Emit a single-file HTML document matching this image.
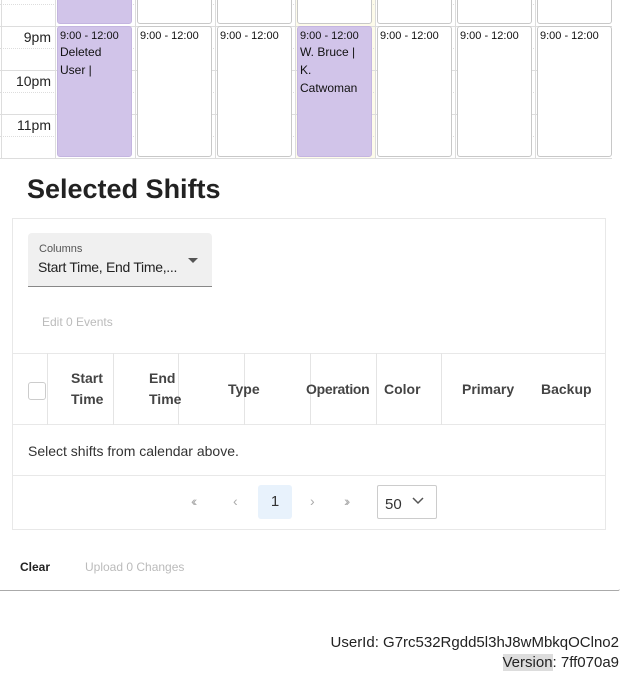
<!DOCTYPE html>
<html><head><meta charset="utf-8"><style>
*{box-sizing:border-box;margin:0;padding:0}
body{width:622px;height:676px;background:#fff;font-family:"Liberation Sans",sans-serif;color:#222;position:relative;overflow:hidden}
.a{position:absolute}
.ev{position:absolute;border:1px solid #c8c8c8;border-radius:3px;background:#fff;font-size:12px;padding:2px 2px;line-height:18px;color:#111}
.ev.p{background:#d1c4e9;border-color:#c4b5e0}
.ev .t{font-size:11px;line-height:14px}
.hl{position:absolute;left:0;width:612px;height:0}
.th{position:absolute;font-size:14px;font-weight:bold;color:#444;line-height:21px}
.vl{position:absolute;top:353px;height:72px;width:1px;background:#e4e4e4}
</style></head><body>
<div class="a" style="left:1px;top:0;width:1px;height:158px;background:#ddd"></div>
<div class="a" style="left:295px;top:0;width:80px;height:158px;background:#fdfbea"></div>
<div class="hl" style="top:26px;border-top:1px solid #ddd"></div>
<div class="hl" style="top:48px;border-top:1px dotted #ddd"></div>
<div class="hl" style="top:70px;border-top:1px solid #ddd"></div>
<div class="hl" style="top:92px;border-top:1px dotted #ddd"></div>
<div class="hl" style="top:114px;border-top:1px solid #ddd"></div>
<div class="hl" style="top:136px;border-top:1px dotted #ddd"></div>
<div class="hl" style="top:4px;border-top:1px dotted #ddd"></div>
<div class="hl" style="top:158px;border-top:1px solid #ddd"></div>
<div class="a" style="left:55px;top:0;width:1px;height:158px;background:#ddd"></div>
<div class="a" style="left:135px;top:0;width:1px;height:158px;background:#ddd"></div>
<div class="a" style="left:215px;top:0;width:1px;height:158px;background:#ddd"></div>
<div class="a" style="left:295px;top:0;width:1px;height:158px;background:#ddd"></div>
<div class="a" style="left:375px;top:0;width:1px;height:158px;background:#ddd"></div>
<div class="a" style="left:455px;top:0;width:1px;height:158px;background:#ddd"></div>
<div class="a" style="left:535px;top:0;width:1px;height:158px;background:#ddd"></div>
<div class="a" style="left:0;top:29px;width:51px;text-align:right;font-size:14px">9pm</div>
<div class="a" style="left:0;top:73px;width:51px;text-align:right;font-size:14px">10pm</div>
<div class="a" style="left:0;top:117px;width:51px;text-align:right;font-size:14px">11pm</div>
<div class="ev p" style="left:57px;top:-4px;width:75px;height:28px"></div>
<div class="ev" style="left:137px;top:-4px;width:75px;height:28px"></div>
<div class="ev" style="left:217px;top:-4px;width:75px;height:28px"></div>
<div class="ev" style="left:297px;top:-4px;width:75px;height:28px"></div>
<div class="ev" style="left:377px;top:-4px;width:75px;height:28px"></div>
<div class="ev" style="left:457px;top:-4px;width:75px;height:28px"></div>
<div class="ev" style="left:537px;top:-4px;width:75px;height:28px"></div>
<div class="ev p" style="left:57px;top:26px;width:75px;height:131px"><div class="t">9:00 - 12:00</div>Deleted<br>User |</div>
<div class="ev" style="left:137px;top:26px;width:75px;height:131px"><div class="t">9:00 - 12:00</div></div>
<div class="ev" style="left:217px;top:26px;width:75px;height:131px"><div class="t">9:00 - 12:00</div></div>
<div class="ev p" style="left:297px;top:26px;width:75px;height:131px"><div class="t">9:00 - 12:00</div>W. Bruce |<br>K.<br>Catwoman</div>
<div class="ev" style="left:377px;top:26px;width:75px;height:131px"><div class="t">9:00 - 12:00</div></div>
<div class="ev" style="left:457px;top:26px;width:75px;height:131px"><div class="t">9:00 - 12:00</div></div>
<div class="ev" style="left:537px;top:26px;width:75px;height:131px"><div class="t">9:00 - 12:00</div></div>

<div class="a" style="left:27px;top:174px;font-size:27px;font-weight:bold;color:#222">Selected Shifts</div>
<div class="a" style="left:12px;top:218px;width:594px;height:312px;border:1px solid #e8e8e8"></div>
<div class="a" style="left:28px;top:233px;width:184px;height:54px;background:#f0f0f0;border-bottom:1px solid #888;border-radius:4px 4px 0 0"></div>
<div class="a" style="left:39px;top:243px;font-size:11px;color:#555">Columns</div>
<div class="a" style="left:38px;top:259px;font-size:14px;color:#222;letter-spacing:-0.3px">Start Time, End Time,...</div>
<div class="a" style="left:188px;top:258px;width:0;height:0;border-left:5px solid transparent;border-right:5px solid transparent;border-top:5px solid #555"></div>
<div class="a" style="left:42px;top:315px;font-size:12px;color:#bbb">Edit 0 Events</div>
<div class="a" style="left:13px;top:353px;width:592px;height:1px;background:#e8e8e8"></div>
<div class="a" style="left:13px;top:424px;width:592px;height:1px;background:#e8e8e8"></div>
<div class="a" style="left:13px;top:475px;width:592px;height:1px;background:#e8e8e8"></div>
<div class="vl" style="left:47px"></div><div class="vl" style="left:113px"></div><div class="vl" style="left:178px"></div><div class="vl" style="left:244px"></div><div class="vl" style="left:310px"></div><div class="vl" style="left:376px"></div><div class="vl" style="left:441px"></div>
<div class="a" style="left:28px;top:382px;width:18px;height:18px;border:1px solid #ccc;border-radius:3px"></div>
<div class="th" style="left:71px;top:368px">Start<br>Time</div>
<div class="th" style="left:149px;top:368px">End<br>Time</div>
<div class="th" style="left:228px;top:379px">Type</div>
<div class="th" style="left:306px;top:379px;letter-spacing:-0.3px">Operation</div>
<div class="th" style="left:384px;top:379px">Color</div>
<div class="th" style="left:462px;top:379px">Primary</div>
<div class="th" style="left:541px;top:379px">Backup</div>
<div class="a" style="left:28px;top:443px;font-size:14px;color:#333">Select shifts from calendar above.</div>
<div class="a" style="left:191px;top:493px;font-size:14px;color:#aaa;letter-spacing:-3px">‹‹</div>
<div class="a" style="left:233px;top:493px;font-size:14px;color:#aaa">‹</div>
<div class="a" style="left:258px;top:485px;width:34px;height:34px;background:#e8f2fc;border-radius:3px;text-align:center;line-height:34px;font-size:15px;color:#333">1</div>
<div class="a" style="left:310px;top:493px;font-size:14px;color:#aaa">›</div>
<div class="a" style="left:344px;top:493px;font-size:14px;color:#aaa;letter-spacing:-3px">››</div>
<div class="a" style="left:377px;top:485px;width:60px;height:34px;border:1px solid #ccc;border-radius:2px"></div>
<div class="a" style="left:385px;top:496px;font-size:15px;color:#333">50</div>
<svg class="a" style="left:411px;top:496px" width="14" height="10"><path d="M2 2L7 7L12 2" stroke="#555" stroke-width="1.5" fill="none"/></svg>
<div class="a" style="left:20px;top:560px;font-size:12px;font-weight:bold;color:#222">Clear</div>
<div class="a" style="left:85px;top:560px;font-size:12px;color:#bbb">Upload 0 Changes</div>
<div class="a" style="left:0;top:589px;width:620px;height:2px;border-bottom:1px solid #aaa;border-right:1px solid #ddd;border-radius:0 0 4px 0"></div>
<div class="a" style="right:3px;top:634px;font-size:15px;color:#222;text-align:right;white-space:nowrap">UserId: G7rc532Rgdd5l3hJ8wMbkqOClno2</div>
<div class="a" style="right:3px;top:654px;font-size:15px;color:#222;text-align:right;white-space:nowrap"><span style="background:#ddd">Version</span>: 7ff070a9</div>
</body></html>
